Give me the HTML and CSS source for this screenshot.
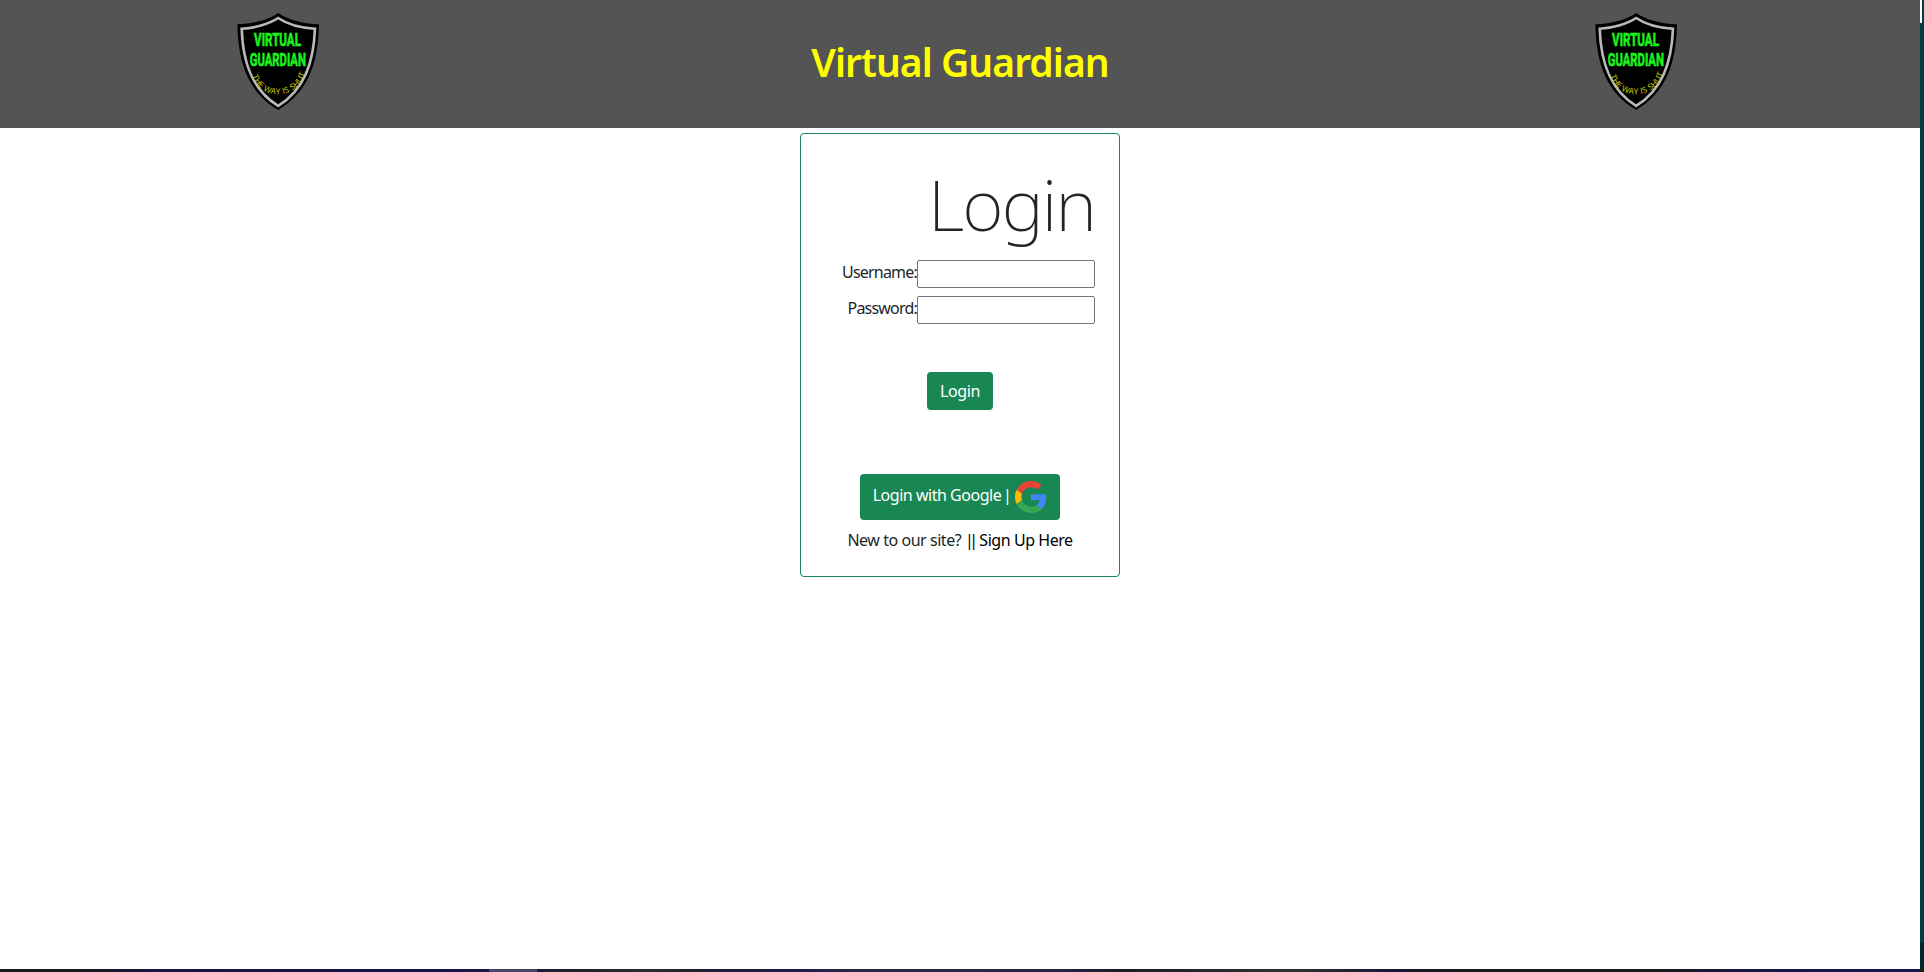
FILE: index.html
```html
<!DOCTYPE html>
<html lang="en">
<head>
<meta charset="utf-8">
<title>Virtual Guardian</title>
<link rel="stylesheet" href="styles.css">
</head>
<body>
<div class="screen">
  <div class="page">
    <header class="banner">
      <svg class="shield" viewBox="53 38 245 290">
        <g id="shield">
          <path d="M176 38C151 57 102 70 54 72C56 190 88 277 176 328C264 277 296 190 298 72C250 70 201 57 176 38Z" fill="#000"/>
          <path d="M176 53C151 70 108 83 67 85C70 188 99 268 176 316C253 268 282 188 286 85C244 83 201 70 176 53Z" fill="#000" stroke="#b9b9b9" stroke-width="8"/>
          <g class="shield-name">
            <text x="104" y="136" textLength="140" lengthAdjust="spacingAndGlyphs">VIRTUAL</text>
            <text x="91" y="197" textLength="168" lengthAdjust="spacingAndGlyphs">GUARDIAN</text>
          </g>
          <path id="arc" d="M98 226C124 300 226 300 256 224" fill="none"/>
          <text class="shield-motto"><textPath href="#arc">THE WAY IS SHUT</textPath></text>
        </g>
      </svg>
      <h1 class="title">Virtual Guardian</h1>
      <svg class="shield" viewBox="53 38 245 290"><use href="#shield"/></svg>
    </header>
    <main class="card">
      <h2 class="heading">Login</h2>
      <label class="field"><span class="label">Username:</span><input type="text"></label>
      <label class="field"><span class="label">Password:</span><input type="password"></label>
      <button class="btn login">Login</button>
      <button class="btn google"><span>Login with Google <span class="bar">|</span></span>
        <svg width="32" height="32" viewBox="0 0 48 48"><path fill="#EA4335" d="M24 9.5c3.54 0 6.71 1.22 9.21 3.6l6.85-6.85C35.9 2.38 30.47 0 24 0 14.62 0 6.51 5.38 2.56 13.22l7.98 6.19C12.43 13.72 17.74 9.5 24 9.5z"/><path fill="#4285F4" d="M46.98 24.55c0-1.57-.15-3.09-.38-4.55H24v9.02h12.94c-.58 2.96-2.26 5.48-4.78 7.18l7.73 6c4.51-4.18 7.09-10.36 7.09-17.65z"/><path fill="#FBBC05" d="M10.53 28.59c-.48-1.45-.76-2.99-.76-4.59s.27-3.14.76-4.59l-7.98-6.19C.92 16.46 0 20.12 0 24c0 3.88.92 7.54 2.56 10.78l7.97-6.19z"/><path fill="#34A853" d="M24 48c6.48 0 11.93-2.13 15.89-5.81l-7.73-6c-2.15 1.45-4.92 2.3-8.16 2.3-6.26 0-11.57-4.22-13.47-9.91l-7.98 6.19C6.51 42.62 14.62 48 24 48z"/></svg>
      </button>
      <p class="signup">New to our site? <a><span class="bars">||</span> Sign Up Here</a></p>
    </main>
  </div>
  <div class="edge"></div>
  <div class="taskbar"><div class="task"></div></div>
</div>
</body>
</html>
```
FILE: styles.css
```css
* { box-sizing: border-box; }
body { margin: 0; background: #fff; color: #212529; font: 16px/24px "Noto Sans", "Open Sans", sans-serif; overflow: hidden; }
.screen { display: grid; grid-template-columns: 1920px 4px; grid-template-rows: 969px 3px; }
.page { display: flex; flex-direction: column; align-items: center; }
.banner { width: 100%; height: 128px; background: #545454; display: grid; grid-template-columns: 556px 1fr 568px; justify-items: center; align-items: start; }
.shield { width: 82px; height: 97px; margin-top: 12.5px; overflow: visible; }
.shield-name { fill: #1cf21c; stroke: #1cf21c; stroke-width: 2; font: 700 57px Roboto, sans-serif; }
.shield-motto { fill: #d2d200; font: 25px "Open Sans", sans-serif; letter-spacing: 0.6px; }
.title { margin: 38px 0 0 12px; font-size: 39px; line-height: 48px; font-weight: 600; color: #ff0; white-space: nowrap; letter-spacing: -0.95px; }
.card { width: 320px; height: 444px; margin-top: 5px; padding: 24px; border: 1px solid #198754; border-radius: 4px; display: flex; flex-direction: column; align-items: center; }
.heading { align-self: flex-end; margin: 2px 0 12px; font-size: 71px; line-height: 88px; font-weight: 200; letter-spacing: -1.8px; }
.field { align-self: flex-end; display: flex; height: 28px; margin-bottom: 8px; white-space: nowrap; }
.field input { width: 178px; height: 28px; margin: 0; padding: 1px 2px; border: 1px solid #767676; border-radius: 2px; background: #fff; }
.label { letter-spacing: -0.8px; }
.btn { border: 0; border-radius: 4px; background: #198754; color: #fff; font: inherit; display: flex; justify-content: center; white-space: nowrap; padding: 0; }
.login { width: 66px; height: 38px; margin-top: 40px; align-items: center; letter-spacing: -0.4px; }
.google { width: 200px; height: 46px; margin-top: 64px; padding: 6.5px 0 0; gap: 4px; align-items: flex-start; letter-spacing: -0.47px; }
.google > span { padding-top: 2px; }
.bar { margin-left: -2px; }
.signup { margin: 8px 0 0; white-space: nowrap; letter-spacing: -0.45px; }
.signup a { color: #000; }
.bars { letter-spacing: -4.5px; margin-right: 2px; }
.edge { background: linear-gradient(#fff, #fff) 0 0 / 2px 23px no-repeat, linear-gradient(#003b48 0 943px, #00252b 943px); }
.taskbar { grid-column: 1 / 3; padding-left: 489px; background: linear-gradient(90deg, #1b1b18 0 60px, #19173f 160px, #17144b 440px, #211d30 560px, #2c2a31 650px, #211e31 700px, #1e1c47 790px, #292843 860px, #292343 1050px, #1e1a29 1120px, #303033 1290px, #1b1734 1390px, #1b1b18 1480px, #1b1b1b 1640px, #17164b 1780px, #171650 1919px, #1b1b18 1920px); }
.task { width: 48px; height: 3px; background: #4a4562; }
```
